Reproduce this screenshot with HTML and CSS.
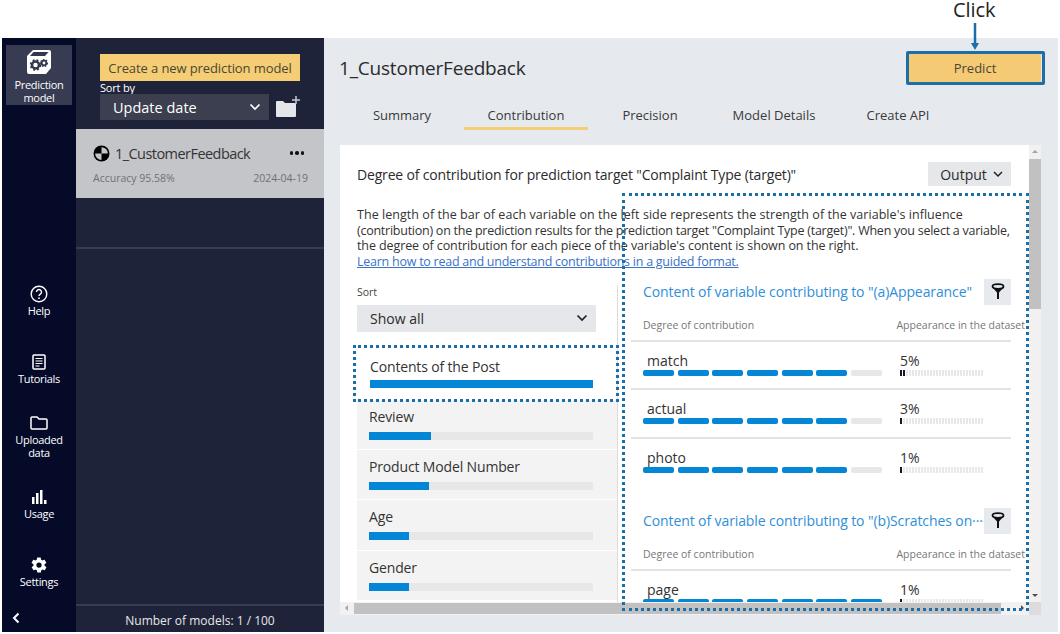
FILE: index.html
```html
<!DOCTYPE html>
<html>
<head>
  <title>Prediction model - Contribution</title>
  <link rel="stylesheet" href="styles.css">
</head>
<body>
  <div class="top-strip"></div>
  <div class="app">
    <nav class="rail">
      <div class="rail-active">
        <svg width="26" height="26" viewBox="0 0 26 26"><path d="M7 1h16q2 0 2 2v16l-5 6H3q-2 0-2-2V7z" fill="#fff"/><path d="M7.5 3h15l-3.500 4H4z" fill="#34384c"/><circle cx="9.500" cy="16" r="3.500" fill="none" stroke="#34384c" stroke-width="2.500"/><circle cx="9.500" cy="16" r="5" fill="none" stroke="#34384c" stroke-width="1.500" stroke-dasharray="2 2"/><circle cx="18" cy="14" r="2.300" fill="none" stroke="#34384c" stroke-width="1.800"/><circle cx="18" cy="14" r="3.500" fill="none" stroke="#34384c" stroke-width="1.200" stroke-dasharray="1.500 1.500"/></svg>
        <span>Prediction<br>model</span>
      </div>
      <div class="rail-links">
        <div class="rail-item rail-help">
          <svg width="18" height="18" viewBox="0 0 18 18"><circle cx="9" cy="9" r="7.800" fill="none" stroke="#fff" stroke-width="1.400"/><path d="M6.500 7a2.500 2.500 0 1 1 3.800 2.100c-.9.600-1.300 1-1.300 2" fill="none" stroke="#fff" stroke-width="1.400"/><circle cx="9" cy="13.200" r=".9" fill="#fff"/></svg>
          <span>Help</span>
        </div>
        <div class="rail-item rail-tutorials">
          <svg width="14" height="16" viewBox="0 0 14 16"><rect x="1" y="1" width="12" height="14" rx="1" fill="none" stroke="#fff" stroke-width="1.500"/><path d="M3.500 4.500h7M3.500 7h7M3.500 9.500h7M3.500 12h4" stroke="#fff" stroke-width="1.200"/></svg>
          <span>Tutorials</span>
        </div>
        <div class="rail-item rail-uploaded">
          <svg width="18" height="14" viewBox="0 0 18 14"><path d="M1 12V2q0-1 1-1h5l2 2h7q1 0 1 1v8q0 1-1 1H2q-1 0-1-1z" fill="none" stroke="#fff" stroke-width="1.500"/></svg>
          <span>Uploaded<br>data</span>
        </div>
        <div class="rail-item rail-usage">
          <svg width="16" height="14" viewBox="0 0 16 14"><path d="M1 7h2.500v7H1zM5 3h2.500v11H5zM9 0h2.500v14H9zM13 10h2.500v4H13z" fill="#fff"/></svg>
          <span>Usage</span>
        </div>
        <div class="rail-item rail-settings">
          <svg width="18" height="18" viewBox="0 0 24 24"><path fill="#fff" d="M19.400 13a7.500 7.500 0 0 0 0-2l2.100-1.600a.5.500 0 0 0 .1-.6l-2-3.500a.5.500 0 0 0-.6-.2l-2.500 1a7.500 7.500 0 0 0-1.700-1l-.4-2.600a.5.500 0 0 0-.5-.5h-4a.5.500 0 0 0-.5.500l-.4 2.600a7.500 7.500 0 0 0-1.700 1l-2.500-1a.5.500 0 0 0-.6.200l-2 3.500a.5.500 0 0 0 .1.600L4.600 11a7.500 7.500 0 0 0 0 2l-2.100 1.600a.5.500 0 0 0-.1.600l2 3.500a.5.500 0 0 0 .6.200l2.500-1a7.500 7.500 0 0 0 1.700 1l.4 2.600a.5.500 0 0 0 .5.500h4a.5.500 0 0 0 .5-.5l.4-2.600a7.500 7.500 0 0 0 1.700-1l2.500 1a.5.500 0 0 0 .6-.2l2-3.500a.5.500 0 0 0-.1-.6zM12 15.500a3.500 3.500 0 1 1 0-7 3.500 3.500 0 0 1 0 7z"/></svg>
          <span>Settings</span>
        </div>
      </div>
      <div class="rail-collapse">
        <svg width="8" height="12" viewBox="0 0 8 12"><path d="M6.500 1.500 2 6l4.500 4.500" fill="none" stroke="#fff" stroke-width="2"/></svg>
      </div>
    </nav>

    <aside class="sidebar">
      <div class="side-head">
        <button class="btn-create">Create a new prediction model</button>
        <div class="sort-label">Sort by</div>
        <div class="sort-row">
          <div class="sort-select">
            <span>Update date</span>
            <svg width="12" height="8" viewBox="0 0 12 8"><path d="M1.500 1.500 6 6l4.500-4.500" fill="none" stroke="#fff" stroke-width="1.700"/></svg>
          </div>
          <svg width="25" height="22" viewBox="0 0 25 22"><path d="M1 20V6q0-1 1-1h6l2 2h10q1 0 1 1v12q0 1-1 1H2q-1 0-1-1z" fill="#e4e6ea"/><path d="M21 0v8M17 4h8" stroke="#c8cad0" stroke-width="1.500"/></svg>
        </div>
      </div>
      <div class="model-card">
        <div class="model-top">
          <svg width="17" height="17" viewBox="0 0 16 16"><circle cx="8" cy="8" r="7.500" fill="#000"/><path d="M8 8V2A6 6 0 0 1 14 8zM8 8v6A6 6 0 0 1 2 8z" fill="#c3c5c9"/></svg>
          <span class="model-name">1_CustomerFeedback</span>
          <span class="model-dots"><i></i><i></i><i></i></span>
        </div>
        <div class="model-meta"><span>Accuracy 95.58%</span><span>2024-04-19</span></div>
      </div>
      <div class="side-empty"></div>
      <div class="side-fill"></div>
      <div class="side-foot">Number of models: 1 / 100</div>
    </aside>

    <main class="main">
      <div class="main-head">
        <h1>1_CustomerFeedback</h1>
        <button class="btn-predict">Predict</button>
      </div>
      <div class="tabs">
        <div class="tab">Summary</div>
        <div class="tab tab-on">Contribution</div>
        <div class="tab">Precision</div>
        <div class="tab">Model Details</div>
        <div class="tab">Create API</div>
      </div>

      <div class="panel-wrap">
        <div class="panel-row">
          <section class="panel">
            <div class="panel-title">
              <h2>Degree of contribution for prediction target "Complaint Type (target)"</h2>
              <div class="btn-output">Output
                <svg width="10" height="7" viewBox="0 0 10 7"><path d="M1 1l4 4 4-4" fill="none" stroke="#222" stroke-width="1.500"/></svg>
              </div>
            </div>
            <p class="intro"><span class="line-loose">The length of the bar of each variable on the left side represents the strength of the variable's influence</span><br><span class="line-tight">(contribution) on the prediction results for the prediction target "Complaint Type (target)". When you select a variable,</span><br>the degree of contribution for each piece of the variable's content is shown on the right.<br><a class="line-tight" href="#">Learn how to read and understand contributions in a guided format.</a></p>

            <div class="columns">
              <div class="col-left">
                <div class="sort-small">Sort</div>
                <div class="show-all">Show all
                  <svg width="12" height="8" viewBox="0 0 12 8"><path d="M1.500 1.500 6 6l4.500-4.500" fill="none" stroke="#222" stroke-width="1.700"/></svg>
                </div>
                <div class="var-list">
                  <div class="var var-on"><div class="var-name">Contents of the Post</div><div class="var-bar"><div class="var-fill" style="width:100%"></div></div></div>
                  <div class="var"><div class="var-name">Review</div><div class="var-bar"><div class="var-fill" style="width:27.700%"></div></div></div>
                  <div class="var"><div class="var-name">Product Model Number</div><div class="var-bar"><div class="var-fill" style="width:26.600%"></div></div></div>
                  <div class="var"><div class="var-name">Age</div><div class="var-bar"><div class="var-fill" style="width:18%"></div></div></div>
                  <div class="var"><div class="var-name">Gender</div><div class="var-bar"><div class="var-fill" style="width:17.700%"></div></div></div>
                </div>
              </div>

              <div class="col-right">
                <div class="group">
                  <div class="group-title">
                    <h3>Content of variable contributing to "(a)Appearance"</h3>
                    <div class="btn-filter"><svg width="14" height="17" viewBox="0 0 14 17"><ellipse cx="7" cy="3.500" rx="5.500" ry="2.300" fill="none" stroke="#111" stroke-width="1.800"/><path d="M2 5l4 4.500V16h2V9.500L12 5z" fill="#111"/></svg></div>
                  </div>
                  <div class="group-head"><span>Degree of contribution</span><span>Appearance in the dataset</span></div>
                  <div class="row">
                    <div class="row-left"><div class="word">match</div><div class="segs"><i></i><i></i><i></i><i></i><i></i><i></i><i class="off"></i></div></div>
                    <div class="row-right"><div class="pct">5%</div><div class="ticks"><div class="ticks-on" style="width:6px"></div></div></div>
                  </div>
                  <div class="row">
                    <div class="row-left"><div class="word">actual</div><div class="segs"><i></i><i></i><i></i><i></i><i></i><i></i><i class="off"></i></div></div>
                    <div class="row-right"><div class="pct">3%</div><div class="ticks"><div class="ticks-on" style="width:3px"></div></div></div>
                  </div>
                  <div class="row">
                    <div class="row-left"><div class="word">photo</div><div class="segs"><i></i><i></i><i></i><i></i><i></i><i></i><i class="off"></i></div></div>
                    <div class="row-right"><div class="pct">1%</div><div class="ticks"><div class="ticks-on" style="width:3px"></div></div></div>
                  </div>
                </div>
                <div class="group">
                  <div class="group-title">
                    <h3>Content of variable contributing to "(b)Scratches on···</h3>
                    <div class="btn-filter"><svg width="14" height="17" viewBox="0 0 14 17"><ellipse cx="7" cy="3.500" rx="5.500" ry="2.300" fill="none" stroke="#111" stroke-width="1.800"/><path d="M2 5l4 4.500V16h2V9.500L12 5z" fill="#111"/></svg></div>
                  </div>
                  <div class="group-head"><span>Degree of contribution</span><span>Appearance in the dataset</span></div>
                  <div class="row">
                    <div class="row-left"><div class="word">page</div><div class="segs"><i></i><i></i><i></i><i></i><i></i><i></i><i></i></div></div>
                    <div class="row-right"><div class="pct">1%</div><div class="ticks"><div class="ticks-on" style="width:3px"></div></div></div>
                  </div>
                </div>
              </div>
            </div>
          </section>
          <div class="vscroll">
            <span class="arrow arrow-up"></span>
            <div class="vthumb"></div>
            <span class="arrow arrow-down"></span>
          </div>
        </div>
        <div class="hscroll">
          <div class="htrack">
            <span class="arrow arrow-left"></span>
            <div class="hthumb"></div>
            <span class="arrow arrow-right"></span>
          </div>
          <div class="scroll-corner"></div>
        </div>
      </div>
    </main>
  </div>

  <!-- annotations laid over the screenshot -->
  <div class="click-label">Click</div>
  <svg class="click-arrow" width="10" height="28" viewBox="0 0 10 28"><path d="M5 0v22" stroke="#1b6ea8" stroke-width="2.500"/><path d="M1 20h8l-4 7z" fill="#1b6ea8"/></svg>
  <div class="predict-ring"></div>
  <div class="dots dots-var"></div>
  <div class="dots dots-content"></div>
</body>
</html>
```

FILE: styles.css
```css
* { box-sizing: border-box; }
html, body { margin: 0; padding: 0; height: 634px; overflow: hidden; }
body { background: #fff; font-family: "Open Sans", "Noto Sans", sans-serif; color: #2b2b2b; position: relative; }
button { font-family: inherit; border: 0; }
h1, h2, h3, p { margin: 0; font-weight: 400; }

.top-strip { height: 38px; }
.app { display: flex; height: 594px; width: 1056px; margin-left: 2px; }

/* left rail */
.rail { width: 74px; background: #050a28; color: #fff; display: flex; flex-direction: column; align-items: center; font-size: 11px; letter-spacing: -0.3px; line-height: 13px; text-align: center; padding-top: 7px; }
.rail-active { width: 66px; height: 60px; background: #383c52; display: flex; flex-direction: column; align-items: center; padding-top: 4px; }
.rail-active svg { margin-bottom: 3px; }
.rail-links { flex: 1; width: 100%; display: flex; flex-direction: column; align-items: center; }
.rail-item { display: flex; flex-direction: column; align-items: center; }
.rail-help { margin-top: 180px; gap: 1px; }
.rail-tutorials { margin-top: 37px; gap: 2px; }
.rail-uploaded { margin-top: 31px; gap: 3px; }
.rail-usage { margin-top: 31px; gap: 3px; }
.rail-settings { margin-top: 36px; gap: 1px; }
.rail-collapse { height: 28px; width: 100%; padding: 8px 0 0 10px; text-align: left; }

/* model list */
.sidebar { width: 248px; background: #1f2339; display: flex; flex-direction: column; color: #fff; }
.side-head { height: 90px; padding: 16px 24px 0; }
.btn-create { display: block; width: 200px; height: 27px; background: #f5cd74; color: #4b4636; font-size: 13px; letter-spacing: -0.1px; padding: 0; }
.sort-label { font-size: 11px; line-height: 13px; letter-spacing: -0.2px; }
.sort-row { display: flex; align-items: center; justify-content: space-between; }
.sort-select { width: 169px; height: 26px; background: #3c3f4f; display: flex; align-items: center; justify-content: space-between; padding: 0 8px 0 13px; font-size: 14.500px; }
.model-card { height: 69px; margin-top: 1px; background: #c3c5c9; color: #333; padding: 15px 6px 0 17px; }
.model-top { display: flex; align-items: center; height: 18px; }
.model-name { font-size: 14.500px; margin-left: 5px; flex: 1; letter-spacing: -0.55px; }
.model-dots { display: flex; gap: 2px; margin-right: 14px; }
.model-dots i { width: 3.500px; height: 3.500px; border-radius: 50%; background: #111; }
.model-meta { display: flex; justify-content: space-between; font-size: 10.500px; color: #6f7175; margin-top: 9px; padding-right: 10px; }
.side-empty { height: 51px; border-bottom: 2px solid #383c50; }
.side-fill { flex: 1; }
.side-foot { height: 28px; border-top: 2px solid #383c50; font-size: 12px; text-align: center; line-height: 29px; color: #e6e7ea; }

/* main area */
.main { flex: 1; background: #e6e9ee; padding-left: 15px; padding-right: 16px; min-width: 0; }
.main-head { display: flex; justify-content: space-between; align-items: center; height: 44px; padding-top: 16px; padding-right: 1px; }
h1 { font-size: 19px; color: #2b2b2b; letter-spacing: -0.2px; }
.btn-predict { width: 132px; height: 28px; background: #f4cb74; color: #4b4636; font-size: 13px; padding: 0; }
.tabs { display: flex; margin-top: 21px; margin-left: 1px; }
.tab { width: 124px; height: 27px; text-align: center; font-size: 13px; color: #3a3a3a; padding-top: 3px; line-height: 18px; border-bottom: 3px solid transparent; }
.tab-on { border-bottom-color: #f5cd74; }

.panel-wrap { margin-top: 15px; margin-left: 1px; height: 470px; width: 701px; display: flex; flex-direction: column; }
.panel-row { flex: 1; display: flex; min-height: 0; }
.panel { width: 689px; background: #fff; padding: 0 0 0 17px; overflow: hidden; }
.panel-title { display: flex; justify-content: space-between; align-items: center; padding: 17px 18px 0 0; }
h2 { font-size: 14px; color: #2b2b2b; letter-spacing: -0.17px; }
.btn-output { width: 83px; height: 24px; background: #e6e7ea; font-size: 14px; display: flex; align-items: center; justify-content: center; gap: 6px; padding-left: 4px; }
.intro { font-size: 12.500px; line-height: 15.700px; margin-top: 21px; white-space: nowrap; letter-spacing: -0.1px; color: #333; }
.intro a { color: #3a72c8; }
.line-loose { letter-spacing: 0.05px; }
.line-tight { letter-spacing: -0.25px; }

.columns { display: flex; margin-top: 15px; }
.col-left { width: 261px; border-right: 1px solid #dcdcdc; flex-shrink: 0; }
.sort-small { font-size: 10.500px; line-height: 14px; color: #444; }
.show-all { width: 239px; height: 27px; margin-top: 6px; background: #e6e7ea; font-size: 14px; display: flex; align-items: center; justify-content: space-between; padding: 0 8px 0 13px; }
.var-list { margin-top: 17px; }
.var { height: 50.250px; background: #f3f3f3; padding: 7px 24px 0 12px; border-bottom: 1px solid #fff; }
.var-on { background: #fff; height: 51px; padding: 8px 24px 0 13px; }
.var-name { font-size: 14px; line-height: 19px; color: #333; letter-spacing: -0.15px; }
.var-bar { height: 8px; margin-top: 6px; background: #e6e7e9; }
.var-on .var-bar { margin-top: 4px; }
.var-fill { height: 8px; background: #0386d5; }

.col-right { flex: 1; padding-left: 13px; padding-right: 18px; min-width: 0; }
.group { height: 235px; }
.group-title { display: flex; align-items: center; justify-content: space-between; height: 26px; padding-left: 12px; margin-top: -6px; }
.group h3 { font-size: 14px; color: #2f8fd8; white-space: nowrap; flex: 1; min-width: 0; letter-spacing: -0.1px; }
.btn-filter { width: 27px; height: 26px; background: #e6e9ee; display: flex; align-items: center; justify-content: center; flex-shrink: 0; }
.group-head { display: flex; justify-content: space-between; font-size: 10.500px; line-height: 14px; color: #777; padding: 13px 0 7px 12px; margin-right: -14px; height: 35px; }
.row { height: 48.500px; border-top: 2px solid #e3e3e3; display: flex; padding: 10px 0 0 12px; justify-content: space-between; }
.row-left { width: 239px; }
.word { font-size: 14px; line-height: 18px; padding-left: 4px; color: #333; }
.segs { display: flex; gap: 3.700px; }
.segs i { width: 31px; height: 6px; border-radius: 2px; background: #0386d5; }
.segs i.off { background: #e6e7e9; }
.row-right { width: 114px; padding-left: 3px; }
.pct { font-size: 14px; line-height: 18px; color: #333; }
.ticks { width: 83px; height: 6px; background: repeating-linear-gradient(to right, #e8e8e8 0 2px, #fff 2px 3px); }
.ticks-on { height: 6px; background: repeating-linear-gradient(to right, #14162a 0 2px, #fff 2px 3px); }

/* fake scrollbars */
.vscroll { width: 12px; background: #f1f1f1; position: relative; padding-top: 14px; }
.vthumb { height: 150px; background: #c1c1c1; }
.hscroll { display: flex; height: 13px; }
.htrack { width: 689px; background: #f1f1f1; position: relative; padding: 1px 0 0 14px; }
.hthumb { width: 647px; height: 11px; background: #c1c1c1; }
.scroll-corner { width: 12px; background: #dcdcdc; }
.arrow { position: absolute; width: 0; height: 0; border: 3px solid transparent; }
.arrow-up { left: 3px; top: 2px; border-bottom-color: #a3a3a3; }
.arrow-down { left: 3px; bottom: 2px; border-top-color: #505050; }
.arrow-left { left: 2px; top: 3px; border-right-color: #a3a3a3; }
.arrow-right { right: 2px; top: 3px; border-left-color: #505050; }

/* annotations */
.click-label { position: absolute; left: 953px; top: 0; font-size: 20px; line-height: 20px; color: #222; letter-spacing: -0.1px; }
.click-arrow { position: absolute; left: 970px; top: 23px; }
.predict-ring { position: absolute; left: 906px; top: 51px; width: 139px; height: 34px; border: 3px solid #1b6ea8; border-radius: 2px; }
.dots { position: absolute; border: 3px dotted #1b6ea8; pointer-events: none; }
.dots-var { left: 353px; top: 345px; width: 266px; height: 57px; }
.dots-content { left: 622px; top: 193px; width: 407px; height: 418px; }
```
